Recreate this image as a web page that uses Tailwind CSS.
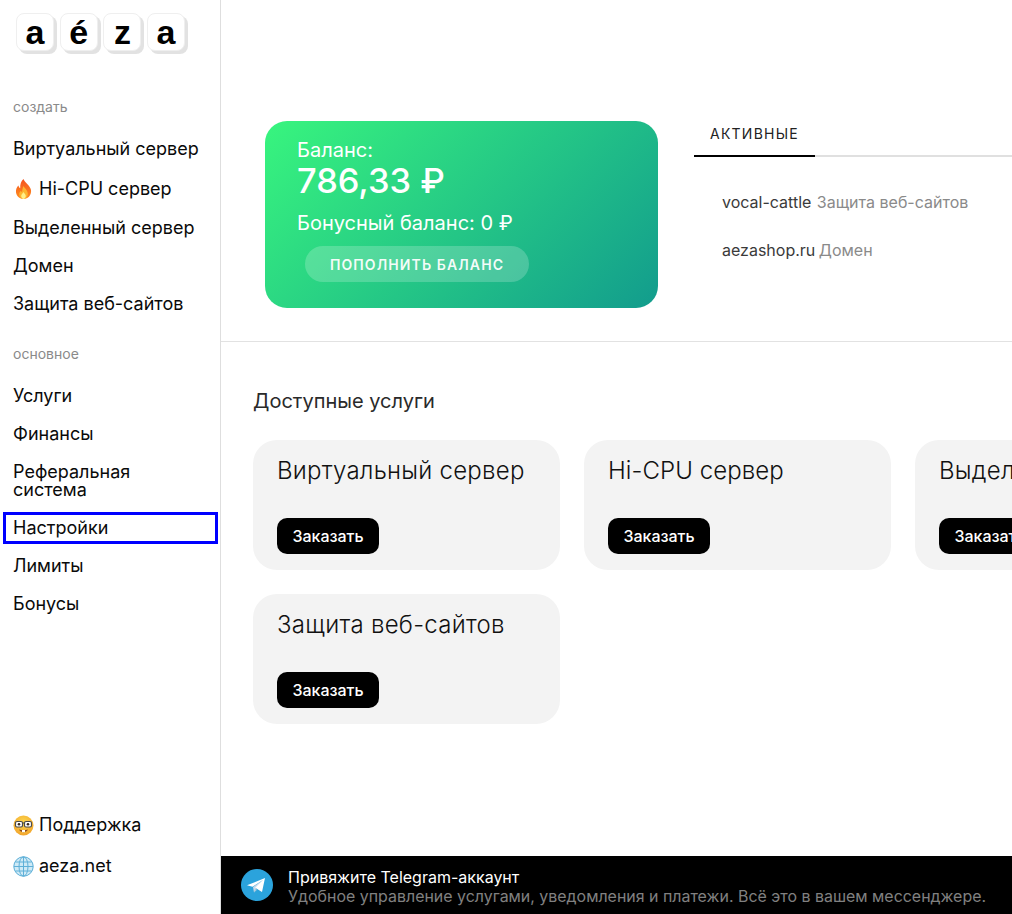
<!DOCTYPE html>
<html lang="ru">
<head>
<meta charset="utf-8">
<script src="https://cdn.jsdelivr.net/npm/@tailwindcss/browser@4"></script>
</head>
<body class="bg-white font-['Inter',sans-serif] overflow-hidden">
<div class="flex h-[914px] w-[1012px] overflow-hidden">
  <aside class="w-[221px] shrink-0 border-r border-[#dedede] flex flex-col text-[18px] text-[#0a0a0a] leading-[18px]">
    <div class="h-[54px] flex gap-[5.7px] pl-[16px] pt-[13px] font-['Liberation_Sans',sans-serif] font-bold text-[34px] leading-none text-black">
      <span class="w-[38px] h-[38px] flex items-center justify-center rounded-[8px] bg-white border border-[#efefef] shadow-[3px_3px_0_#e2e2e2]">a</span>
      <span class="w-[38px] h-[38px] flex items-center justify-center rounded-[8px] bg-white border border-[#efefef] shadow-[3px_3px_0_#e2e2e2]">é</span>
      <span class="w-[38px] h-[38px] flex items-center justify-center rounded-[8px] bg-white border border-[#efefef] shadow-[3px_3px_0_#e2e2e2]">z</span>
      <span class="w-[38px] h-[38px] flex items-center justify-center rounded-[8px] bg-white border border-[#efefef] shadow-[3px_3px_0_#e2e2e2]">a</span>
    </div>
    <div class="pl-[13px] mt-[43px] text-[14px] text-[#8a8a8a] leading-[20px]">создать</div>
    <nav class="mt-[23px] flex flex-col pl-[13px]">
      <a class="h-[18px] mb-[22px] block">Виртуальный сервер</a>
      <a class="h-[18px] mb-[21px] flex items-center gap-[5px]">
        <svg width="21" height="22" viewBox="0 0 21 22"><defs><linearGradient id="fl" x1="0" y1="0" x2="0" y2="1"><stop offset="0" stop-color="#f4511e"/><stop offset="1" stop-color="#ff8f1f"/></linearGradient></defs><path d="M10.500 1c1 3.500 6.500 6 7.500 11 .7 5-3 9-7.500 9S2.500 17 3 12.500c.3-2.500 1.500-4 2.500-5 .2 1.500.8 2.300 1.700 2.700C7 6.500 8 3 10.500 1z" fill="url(#fl)"/><path d="M10.500 8c.6 2 4 3.700 4.300 7.500.2 3-2.300 5.500-4.300 5.500s-4.600-2.500-4.300-5.300c.2-1.500 1-2.500 1.800-3 .2.800.5 1.200 1 1.400C9.300 12.500 9.500 10 10.500 8z" fill="#fdb52f"/><path d="M10.500 14c.3 1 2.300 2.200 2.300 4 0 1.500-1.200 3-2.300 3s-2.300-1.500-2.300-3c0-1.800 2-3 2.300-4z" fill="#fff08a"/></svg>
        <span>Hi-CPU сервер</span>
      </a>
      <a class="h-[18px] mb-[20px] block">Выделенный сервер</a>
      <a class="h-[18px] mb-[20px] block">Домен</a>
      <a class="h-[18px] block">Защита веб-сайтов</a>
    </nav>
    <div class="pl-[13px] mt-[31px] text-[14px] text-[#8a8a8a] leading-[20px]">основное</div>
    <nav class="mt-[23px] flex flex-col pl-[13px]">
      <a class="h-[18px] mb-[20px] block">Услуги</a>
      <a class="h-[18px] mb-[20px] block">Финансы</a>
      <a class="h-[36px] mb-[20px] block">Реферальная<br>система</a>
      <a class="-ml-[10px] w-[215px] h-[32px] -mt-[7px] mb-[13px] pl-[7px] flex items-center border-[3px] border-[#0000ff]">Настройки</a>
      <a class="h-[18px] mb-[20px] block">Лимиты</a>
      <a class="h-[18px] block">Бонусы</a>
    </nav>
    <div class="mt-auto pl-[13px] pb-[39px] flex flex-col gap-[23px]">
      <a class="h-[18px] flex items-center gap-[5px]">
        <svg width="21" height="21" viewBox="0 0 21 21"><defs><radialGradient id="f" cx="50%" cy="35%" r="65%"><stop offset="0" stop-color="#fdd84f"/><stop offset="1" stop-color="#f2a52c"/></radialGradient></defs><circle cx="10.500" cy="10.500" r="10" fill="url(#f)"/><rect x="2.500" y="6.500" width="7" height="5.500" rx="1.500" fill="#fff" stroke="#4a4a4a" stroke-width="1.200"/><rect x="11.500" y="6.500" width="7" height="5.500" rx="1.500" fill="#fff" stroke="#4a4a4a" stroke-width="1.200"/><path d="M9.500 8h2" stroke="#4a4a4a"/><circle cx="6" cy="9.300" r="1.300" fill="#3a2a1a"/><circle cx="15" cy="9.300" r="1.300" fill="#3a2a1a"/><path d="M6 14.500c2 3.500 7 3.500 9 0-3 .8-6 .8-9 0z" fill="#8a4a20"/><rect x="9" y="15" width="3" height="2.200" fill="#fff"/></svg>
        <span>Поддержка</span>
      </a>
      <a class="h-[18px] flex items-center gap-[5px]">
        <svg width="21" height="21" viewBox="0 0 21 21" fill="none"><circle cx="10.500" cy="10.500" r="10" fill="#cfeaf6"/><g stroke="#5fb0d8" stroke-width="1"><circle cx="10.500" cy="10.500" r="9.700"/><ellipse cx="10.500" cy="10.500" rx="4.500" ry="9.700"/><path d="M10.500 1v19M1 10.500h19M2.200 6h16.600M2.200 15h16.600"/></g></svg>
        <span>aeza.net</span>
      </a>
    </div>
  </aside>

  <main class="flex-1 min-w-0 relative overflow-hidden">
    <section class="h-[342px] border-b border-[#e2e2e2] pt-[121px] pl-[44px] flex">
      <div class="w-[393px] h-[187px] shrink-0 rounded-[22px] bg-[linear-gradient(135deg,#38f57e,#129c8d)] text-white pl-[32px] pt-[19px]">
        <div class="text-[20px] leading-[20px]">Баланс:</div>
        <div class="text-[34.400px] leading-[40px] font-medium mt-px">786,33 ₽</div>
        <div class="text-[20px] leading-[24px] mt-[10px]">Бонусный баланс: 0 ₽</div>
        <div class="ml-[8px] mt-[11px] w-[224px] h-[36px] rounded-full bg-white/20 flex items-center justify-center text-[14px] font-semibold tracking-[1.100px] text-white/95">ПОПОЛНИТЬ БАЛАНС</div>
      </div>
      <div class="flex-1 ml-[36px] min-w-0">
        <div class="h-[36px] border-b-2 border-[#e0e0e0]">
          <div class="w-[121px] h-[36px] border-b-2 border-black text-[14px] tracking-[1.250px] text-[#222] flex justify-center items-start pt-[4px] box-border leading-[17px]">АКТИВНЫЕ</div>
        </div>
        <div class="pl-[28px] pt-[35px] text-[16px] leading-[20px] text-[#3a3a3a]">
          <div class="whitespace-nowrap">vocal-cattle <span class="text-[#8a8a8a] ml-px">Защита веб-сайтов</span></div>
          <div class="whitespace-nowrap mt-[28px]">aezashop.ru <span class="text-[#8a8a8a] -ml-px">Домен</span></div>
        </div>
      </div>
    </section>
    <section class="pl-[32px] pt-[47px]">
      <h2 class="text-[20px] leading-[24px] text-[#2a2a2a]">Доступные услуги</h2>
      <div class="mt-[27px] grid grid-cols-[307px_307px_307px] gap-x-[24px] gap-y-[24px] w-[970px]">
        <div class="h-[130px] rounded-[24px] bg-[#f3f3f3] pl-[24px] pt-[16px]">
          <div class="text-[24px] leading-[30px] font-light tracking-[0.240px] text-[#111] whitespace-nowrap">Виртуальный сервер</div>
          <button class="mt-[32px] w-[102px] h-[36px] rounded-[10px] bg-black text-white text-[16px] font-medium">Заказать</button>
        </div>
        <div class="h-[130px] rounded-[24px] bg-[#f3f3f3] pl-[24px] pt-[16px]">
          <div class="text-[24px] leading-[30px] font-light tracking-[0.080px] text-[#111] whitespace-nowrap">Hi-CPU сервер</div>
          <button class="mt-[32px] w-[102px] h-[36px] rounded-[10px] bg-black text-white text-[16px] font-medium">Заказать</button>
        </div>
        <div class="h-[130px] rounded-[24px] bg-[#f3f3f3] pl-[24px] pt-[16px]">
          <div class="text-[24px] leading-[30px] font-light tracking-[0.240px] text-[#111] whitespace-nowrap">Выделенный сервер</div>
          <button class="mt-[32px] w-[102px] h-[36px] rounded-[10px] bg-black text-white text-[16px] font-medium">Заказать</button>
        </div>
        <div class="h-[130px] rounded-[24px] bg-[#f3f3f3] pl-[24px] pt-[16px]">
          <div class="text-[24px] leading-[30px] font-light tracking-[0.280px] text-[#111] whitespace-nowrap">Защита веб-сайтов</div>
          <button class="mt-[32px] w-[102px] h-[36px] rounded-[10px] bg-black text-white text-[16px] font-medium">Заказать</button>
        </div>
      </div>
    </section>
    <div class="absolute left-0 right-0 bottom-0 h-[58px] bg-black flex items-center pl-[20px] gap-[15px]">
      <svg width="32" height="32" viewBox="0 0 32 32" class="shrink-0"><circle cx="16" cy="16" r="16" fill="#2ba3dc"/><path d="M13 23.500L12 18l10-7-7 8.500z" fill="#c8daea"/><path d="M13 23.500l3-2.800-1.800-1.300z" fill="#a9c9dd"/><path d="M6 16.300L24 9l-3 14-6.800-4.300L22 11l-10.500 6.800z" fill="#fff"/></svg>
      <div class="whitespace-nowrap pt-[4px]">
        <div class="text-[16px] leading-[20px] text-white">Привяжите Telegram-аккаунт</div>
        <div class="text-[15.950px] leading-[20px] text-[#808080]">Удобное управление услугами, уведомления и платежи. Всё это в вашем мессенджере.</div>
      </div>
    </div>
  </main>
</div>
</body>
</html>
